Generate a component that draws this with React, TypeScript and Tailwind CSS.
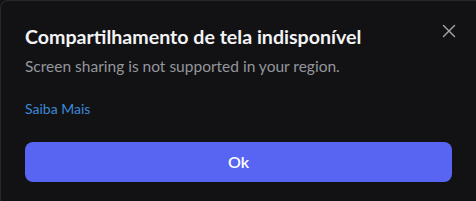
import { X } from "lucide-react";

export default function App() {
  return (
    <div className="w-[476px] h-[201px] bg-[#121214]">
      <div
        className="relative h-full rounded-tl-lg border-l border-t border-[#26272b] bg-[#121214] px-6 pt-[22px]"
        style={{ fontFamily: 'Lato, "Noto Sans", sans-serif' }}
      >
        <button className="absolute right-[16px] top-[19px] text-[#a1a3aa]">
          <X size={22} strokeWidth={1.5} />
        </button>
        <h1 className="text-[19.6px] font-bold leading-[28px] text-[#f2f3f5]">
          Compartilhamento de tela indisponível
        </h1>
        <p className="mt-[5px] text-[15.5px] leading-[20px] text-[#94969c]">
          Screen sharing is not supported in your region.
        </p>
        <a className="mt-[24px] block text-[14px] leading-[18px] text-[#3c8ad8]">Saiba Mais</a>
        <button className="mt-[24px] flex h-[40px] w-full items-center justify-center rounded-lg bg-[#5865f2] text-[16px] font-semibold text-white">
          Ok
        </button>
      </div>
    </div>
  );
}
